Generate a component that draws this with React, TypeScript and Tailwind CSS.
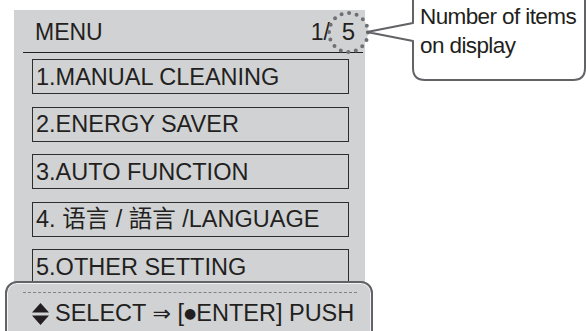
const items = [
  '1.MANUAL CLEANING',
  '2.ENERGY SAVER',
  '3.AUTO FUNCTION',
  '4. 语言 / 語言 /LANGUAGE',
  '5.OTHER SETTING',
]

function UpDown() {
  return (
    <svg width="17" height="22" viewBox="0 0 17 22" className="shrink-0">
      <path d="M8.5 0 L17 9.5 H0 Z" fill="#231f20" />
      <path d="M0 12.5 H17 L8.5 22 Z" fill="#231f20" />
    </svg>
  )
}

export default function App() {
  return (
    <div
      className="relative w-[586px] h-[331px] overflow-hidden bg-white text-[#231f20]"
      style={{ fontFamily: '"Liberation Sans", "Noto Sans CJK SC", sans-serif' }}
    >
      {/* menu panel */}
      <div className="ml-[14px] mt-[10px] w-[351px] h-[321px] bg-[#d1d2d4] flex flex-col">
        <div className="relative ml-[9px] mr-[2px] h-[43px] border-b-[1.5px] border-[#231f20] flex items-center justify-between pl-[12px] text-[23px] leading-none">
          <span className="mt-[2px]">MENU</span>
          <div className="flex items-center -mr-[7px] mt-[2px]">
            <span>1/</span>
            <div className="relative -ml-[3px] w-[43px] h-[43px] flex items-center justify-center">
              <svg width="43" height="43" viewBox="0 0 43 43" className="absolute inset-0">
                <circle
                  cx="21.5"
                  cy="21.5"
                  r="19.5"
                  fill="#d1d2d4"
                  stroke="#6f7073"
                  strokeWidth="4"
                  strokeLinecap="round"
                  strokeDasharray="0 7.66"
                />
              </svg>
              <span className="relative text-[24px]">5</span>
            </div>
          </div>
        </div>

        <div className="ml-[18px] mt-[6px] w-[317px] flex flex-col gap-[12.5px]">
          {items.map((t) => (
            <div
              key={t}
              className="h-[35px] border-[1.5px] border-[#2d2d2d] flex items-center pl-[3px] text-[23.5px] leading-none whitespace-nowrap"
            >
              <span className="mt-[2px]">{t}</span>
            </div>
          ))}
        </div>
      </div>

      {/* bottom operation guide */}
      <div className="absolute left-[5px] top-[281px] w-[368px] h-[64px] rounded-[12px] border-2 border-[#626366] bg-[#d1d2d4] shadow-[inset_0_0_0_1px_#f2f2f2]">
        <div className="ml-[16px] mr-[14px] mt-[9px] border-t border-dashed border-[#808285]" />
        <div className="flex items-center h-[42px] pl-[25px] gap-[6px] text-[23.5px] leading-none whitespace-nowrap">
          <UpDown />
          <span>
            SELECT{' '}
            <span style={{ fontFamily: '"DejaVu Sans", sans-serif' }} className="text-[22px]">
              ⇒
            </span>{' '}
            [
            <span style={{ fontFamily: '"DejaVu Sans", sans-serif' }} className="text-[14px] align-[3px]">
              ●
            </span>
            ENTER] PUSH
          </span>
        </div>
      </div>

      {/* callout */}
      <svg width="586" height="331" className="absolute inset-0 pointer-events-none">
        <path
          d="M413 -5 V23 L367 32 L413 41 V68 Q413 80 425 80 H573 Q585 80 585 68 V-5"
          fill="white"
          stroke="#626366"
          strokeWidth="2"
          strokeLinejoin="round"
        />
      </svg>
      <div className="absolute left-[420px] top-[2px] text-[22.5px] leading-[29px] tracking-[-0.6px] whitespace-nowrap">
        <div>Number of items</div>
        <div>on display</div>
      </div>
    </div>
  )
}
